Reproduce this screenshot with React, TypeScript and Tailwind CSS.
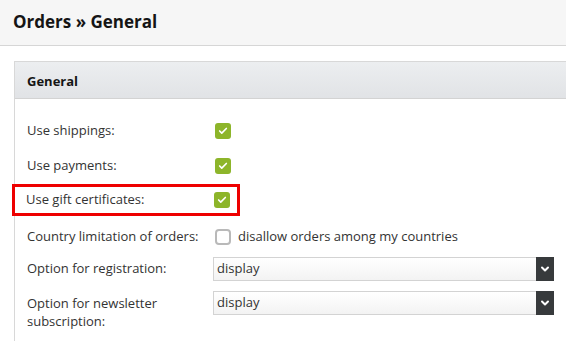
import { Check, ChevronDown } from "lucide-react";

function GreenBox() {
  return (
    <span className="flex h-4 w-4 items-center justify-center rounded-[3px] bg-[#8db52a]">
      <Check className="h-[10px] w-[10px] text-white" strokeWidth={4} />
    </span>
  );
}

function Dropdown({ value }: { value: string }) {
  return (
    <div className="flex h-6 w-[341px] border border-[#d3d3d3] bg-gradient-to-b from-white to-[#f3f3f3]">
      <div className="flex flex-1 items-center pl-[3px] text-[13px] text-[#333]">{value}</div>
      <div className="-my-px -mr-px flex w-[18px] items-center justify-center bg-[#373a3c]">
        <ChevronDown className="h-3 w-3 text-white" strokeWidth={4} />
      </div>
    </div>
  );
}

export default function App() {
  const checks = ["Use shippings:", "Use payments:"];

  return (
    <div
      className="h-[341px] w-[566px] overflow-hidden bg-white text-[#333]"
      style={{ fontFamily: '"Open Sans", sans-serif' }}
    >
      <div className="flex h-[46px] items-center border-b border-[#d6d6d6] bg-[#f6f6f6] pl-[13px]">
        <h1 className="pb-px text-[17px] font-bold text-[#151515]">Orders » General</h1>
      </div>

      <div className="ml-[14px] mt-[15px] w-[600px] border border-[#d8d8d8]">
        <div className="flex h-[37px] items-center border-b border-[#d3d3d3] bg-gradient-to-b from-[#eceef0] to-[#e1e3e6] pl-[12px] pt-[3px]">
          <span className="text-[13px] font-bold text-[#151515]">General</span>
        </div>

        <div className="pl-[12px] pt-[14px] pb-6 text-[13px]">
          {checks.map((c) => (
            <div key={c} className="flex h-[35px] items-center">
              <span className="w-[188px]">{c}</span>
              <GreenBox />
            </div>
          ))}

          <div className="-ml-[15px] mt-px flex h-[32px] w-[228px] items-center border-[3px] border-[#ee0000] pl-[11px]">
            <span className="w-[188px]">Use gift certificates:</span>
            <GreenBox />
          </div>

          <div className="mt-[9px] flex h-6 items-center">
            <span className="w-[188px]">Country limitation of orders:</span>
            <span className="h-4 w-4 rounded-[4px] border-2 border-[#b9b9b9] bg-white" />
            <span className="ml-[7px]">disallow orders among my countries</span>
          </div>

          <div className="mt-[8px] flex items-center">
            <span className="w-[186px]">Option for registration:</span>
            <Dropdown value="display" />
          </div>

          <div className="mt-[10px] flex items-start">
            <span className="w-[186px] pt-[3px] leading-[18px]">
              Option for newsletter
              <br />
              subscription:
            </span>
            <Dropdown value="display" />
          </div>
        </div>
      </div>
    </div>
  );
}
